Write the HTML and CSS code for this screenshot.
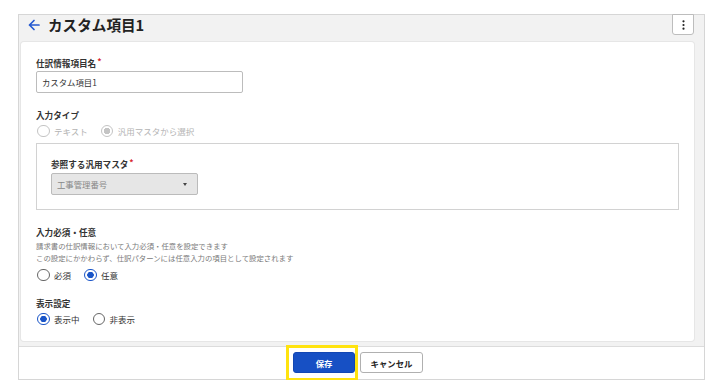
FILE: index.html
```html
<!DOCTYPE html>
<html lang="ja">
<head>
    <meta charset="UTF-8">
    <meta name="viewport" content="width=device-width, initial-scale=1.0">
    <title>カスタム項目1</title>
    <link rel="stylesheet" href="styles.css">
</head>
<body>
    <div class="frame">
        <div class="header">
            <a class="back" href="#">
                <svg width="12" height="12" viewBox="0 0 12 12">
                    <path d="M11 6H1.5M6 1.5L1.5 6L6 10.5" fill="none" stroke="#2458d0" stroke-width="1.7" stroke-linecap="round" stroke-linejoin="round"/>
                </svg>
            </a>
            <h1 class="title">カスタム項目1</h1>
            <button class="kebab">
                <svg width="3" height="10" viewBox="0 0 3 10">
                    <circle cx="1.5" cy="1.3" r="1.1" fill="#222"/>
                    <circle cx="1.5" cy="5" r="1.1" fill="#222"/>
                    <circle cx="1.5" cy="8.7" r="1.1" fill="#222"/>
                </svg>
            </button>
        </div>

        <div class="card">
            <div class="field-label">仕訳情報項目名<span class="req">*</span></div>
            <div class="text-input">カスタム項目1</div>

            <div class="field-label section">入力タイプ</div>
            <div class="radio-row">
                <label class="radio disabled"><span class="mark"></span>テキスト</label>
                <label class="radio disabled checked"><span class="mark"></span>汎用マスタから選択</label>
            </div>

            <div class="sub-box">
                <div class="field-label">参照する汎用マスタ<span class="req">*</span></div>
                <div class="select">
                    <span>工事管理番号</span>
                    <span class="caret"></span>
                </div>
            </div>

            <div class="field-label section">入力必須・任意</div>
            <p class="desc">請求書の仕訳情報において入力必須・任意を設定できます</p>
            <p class="desc">この設定にかかわらず、仕訳パターンには任意入力の項目として設定されます</p>
            <div class="radio-row gap-top">
                <label class="radio"><span class="mark"></span>必須</label>
                <label class="radio checked"><span class="mark"></span>任意</label>
            </div>

            <div class="field-label section-lg">表示設定</div>
            <div class="radio-row">
                <label class="radio checked"><span class="mark"></span>表示中</label>
                <label class="radio"><span class="mark"></span>非表示</label>
            </div>
        </div>

        <div class="footer">
            <button class="btn primary">保存<span class="highlight"></span></button>
            <button class="btn secondary">キャンセル</button>
        </div>
    </div>
</body>
</html>
```

FILE: styles.css
```css
body {
    margin: 0;
    background-color: #ffffff;
    font-family: "Noto Sans CJK JP", "Noto Sans", sans-serif;
    color: #333;
}
.frame {
    margin: 14px 0 0 18px;
    width: 685px;
    border: 1px solid #d6d6d6;
    background-color: #f2f2f2;
}
.header {
    height: 26.5px;
    display: flex;
    align-items: flex-start;
    padding: 0 10px 0 9px;
}
.back {
    display: flex;
    align-items: center;
    height: 20px;
    width: 12px;
}
.title {
    margin: 0 0 0 8px;
    font-size: 14.6px;
    line-height: 20px;
    font-weight: 700;
    color: #222;
    flex: 1;
}
.kebab {
    margin-top: -1px;
    width: 22px;
    height: 21px;
    padding: 0;
    border: 1px solid #bdbdbd;
    border-radius: 0 0 3px 3px;
    background-color: #fff;
    display: flex;
    align-items: center;
    justify-content: center;
}
.card {
    margin: 0 10px 0 2px;
    background-color: #fff;
    border-radius: 3px;
    box-shadow: 0 0 0 1px #e6e6e6;
    padding: 15.5px 15px 15px;
}
.field-label {
    font-size: 8.6px;
    line-height: 12px;
    font-weight: 700;
    color: #333;
}
.field-label.section {
    margin-top: 16px;
}
.field-label.section-lg {
    margin-top: 15px;
}
.req {
    color: #d8252d;
    margin-left: 1px;
    position: relative;
    top: -2px;
}
.text-input {
    margin-top: 2px;
    width: 200px;
    height: 20px;
    border: 1px solid #bcbcbc;
    border-radius: 2px;
    font-size: 8.4px;
    line-height: 20px;
    padding-left: 5px;
    color: #333;
}
.radio-row {
    display: flex;
    gap: 12px;
    margin-top: 3px;
    height: 14px;
    align-items: center;
}
.radio-row.gap-top {
    margin-top: 4px;
}
.radio {
    display: flex;
    align-items: center;
    gap: 4.5px;
    font-size: 8.5px;
    line-height: 14px;
    color: #333;
}
.mark {
    box-sizing: border-box;
    width: 12.5px;
    height: 12.5px;
    border: 1.3px solid #666;
    border-radius: 50%;
    margin-left: 1px;
    background-color: #fff;
}
.radio.checked .mark {
    border: 1.5px solid #1a55c8;
    background: radial-gradient(circle, #1a55c8 0 3px, #fff 3.5px);
}
.radio.disabled {
    color: #b4b4b4;
}
.radio.disabled .mark {
    border-color: #c4c4c4;
}
.radio.disabled.checked .mark {
    border: 1.3px solid #c4c4c4;
    background: radial-gradient(circle, #c4c4c4 0 3px, #fff 3.5px);
}
.sub-box {
    margin-top: 5px;
    border: 1px solid #d2d2d2;
    padding: 14px 14px 14px;
}
.select {
    margin-top: 3px;
    width: 144px;
    height: 20px;
    border: 1px solid #bbbbbb;
    border-radius: 2px;
    background-color: #e6e6e6;
    display: flex;
    align-items: center;
    justify-content: space-between;
    padding: 0 10px 0 5px;
    box-sizing: content-box;
    width: 130px;
    font-size: 8.4px;
    color: #888;
}
.caret {
    width: 0;
    height: 0;
    border-left: 2.5px solid transparent;
    border-right: 2.5px solid transparent;
    border-top: 3px solid #444;
}
.desc {
    margin: 2px 0 0;
    font-size: 7.4px;
    line-height: 12px;
    color: #7a7a7a;
}
.desc + .desc {
    margin-top: 0;
}
.footer {
    margin-top: 4.5px;
    border-top: 1px solid #dcdcdc;
    background-color: #fff;
    height: 32px;
    display: flex;
    align-items: center;
    justify-content: center;
    gap: 5px;
    padding-right: 7px;
}
.btn {
    height: 21.5px;
    border-radius: 3px;
    font-family: "Noto Sans CJK JP", "Noto Sans", sans-serif;
    font-size: 8.4px;
    font-weight: 700;
    padding: 0;
}
.btn.primary {
    position: relative;
    width: 62px;
    background-color: #1750c4;
    border: 1px solid #1347b3;
    color: #fff;
}
.btn.secondary {
    width: 63px;
    background-color: #fff;
    border: 1px solid #b0b0b0;
    color: #222;
}
.highlight {
    position: absolute;
    left: -8px;
    top: -7.7px;
    width: 66px;
    height: 29.5px;
    border: 3.5px solid #ffe30f;
}
```
